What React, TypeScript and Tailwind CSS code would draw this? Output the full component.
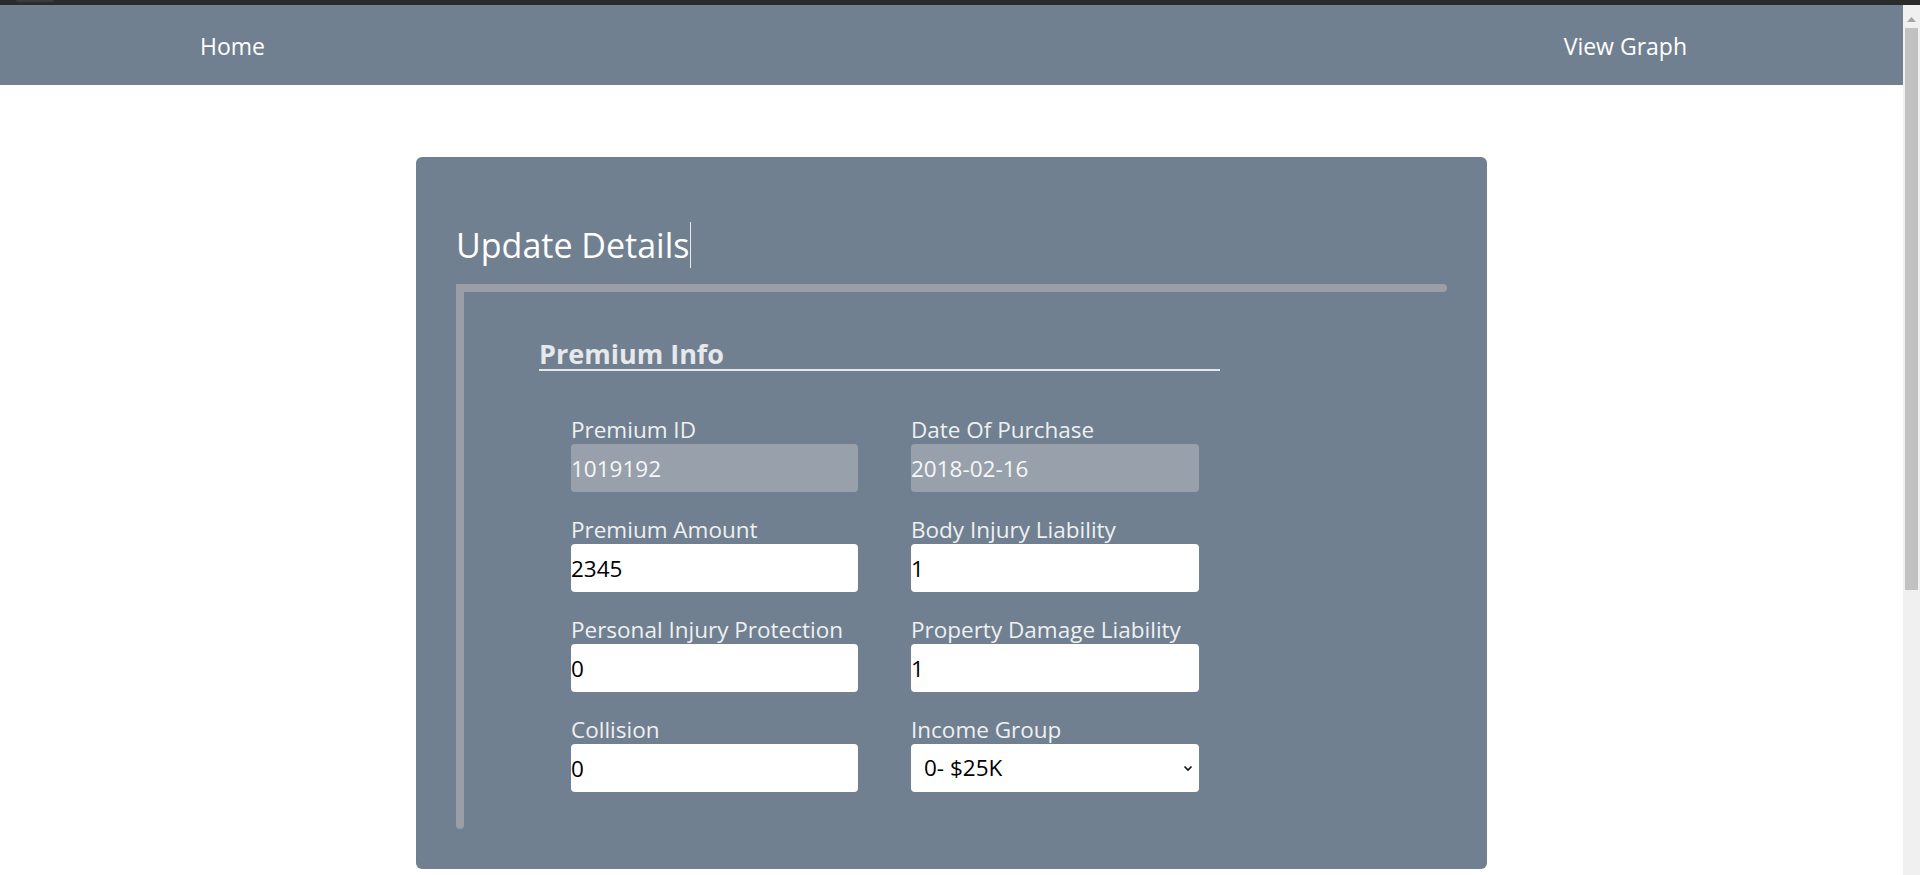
import React from "react";

const font = { fontFamily: '"Open Sans", "Noto Sans", sans-serif' };

function Field({
  label,
  value,
  disabled,
}: {
  label: string;
  value: string;
  disabled?: boolean;
}) {
  return (
    <div className="flex flex-col">
      <label className="text-[22.5px] leading-[28px] text-[#eef0f2] whitespace-nowrap">{label}</label>
      <input
        readOnly
        value={value}
        className={
          "h-[48px] w-full rounded-[4px] px-0 text-[22.5px] outline-none " +
          (disabled ? "bg-[#97a0ab] text-[#f6f7f8]" : "bg-white text-black")
        }
        style={font}
      />
    </div>
  );
}

export default function App() {
  return (
    <div className="flex h-[875px] flex-col overflow-hidden bg-white" style={font}>
      <div className="flex h-[5px] shrink-0 bg-[#2b2b2b]">
        <div className="ml-[16px] h-[2px] w-[38px] rounded-b-sm bg-[#3c3c3c]" />
      </div>
      <div className="flex min-h-0 flex-1">
        <div className="flex flex-1 flex-col">
          <nav className="flex h-[80px] items-center justify-between bg-[#708090] pl-[200px] pr-[216px] pt-[3px] text-[23px] text-white">
            <span>Home</span>
            <span>View Graph</span>
          </nav>
          <main className="pt-[72px]">
            <div className="mx-auto w-[1071px] rounded-[6px] bg-[#708090] px-[40px] pb-[40px] pt-[65px]">
              <h2 className="flex items-center text-[34px] leading-[46px] text-white">
                <span>Update Details</span>
                <span className="ml-[1px] h-[46px] w-[1px] bg-[#e8eaee]" />
              </h2>
              <div className="mt-[16px] flex flex-col">
                <div className="h-[8px] rounded-r-[4px] bg-[#9a9ea6]" />
                <div className="flex">
                  <div className="w-[8px] rounded-b-[4px] bg-[#9a9ea6]" />
                  <div className="flex-1 pb-[37px] pl-[75px] pt-[47px]">
                    <div className="w-[681px] border-b-2 border-[#e4e6ea] text-[27px] font-bold leading-[30px] text-[#e6e8ec]">
                      Premium Info
                    </div>
                    <div className="ml-[32px] mt-[45px] grid w-[628px] grid-cols-[287px_288px] gap-x-[53px] gap-y-[24px]">
                      <Field label="Premium ID" value="1019192" disabled />
                      <Field label="Date Of Purchase" value="2018-02-16" disabled />
                      <Field label="Premium Amount" value="2345" />
                      <Field label="Body Injury Liability" value="1" />
                      <Field label="Personal Injury Protection" value="0" />
                      <Field label="Property Damage Liability" value="1" />
                      <Field label="Collision" value="0" />
                      <div className="flex flex-col">
                        <label className="text-[22.5px] leading-[28px] text-[#eef0f2]">Income Group</label>
                        <div className="flex h-[48px] items-center justify-between rounded-[4px] bg-white pl-[13px] pr-[6px] text-[22.5px] text-black">
                          <span>0- $25K</span>
                          <svg width="10" height="8" viewBox="0 0 10 8">
                            <path d="M1.5 2.5 L5 6 L8.5 2.5" fill="none" stroke="#111" strokeWidth="1.6" />
                          </svg>
                        </div>
                      </div>
                    </div>
                  </div>
                </div>
              </div>
            </div>
          </main>
        </div>
        <div className="flex w-[17px] shrink-0 flex-col items-center bg-[#f0f0f0]">
          <svg className="mt-[12px]" width="9" height="5" viewBox="0 0 9 5">
            <path d="M0 5 L4.5 0 L9 5 Z" fill="#a3a3a3" />
          </svg>
          <div className="mt-[6px] h-[562px] w-[13px] bg-[#c1c1c1]" />
        </div>
      </div>
    </div>
  );
}
